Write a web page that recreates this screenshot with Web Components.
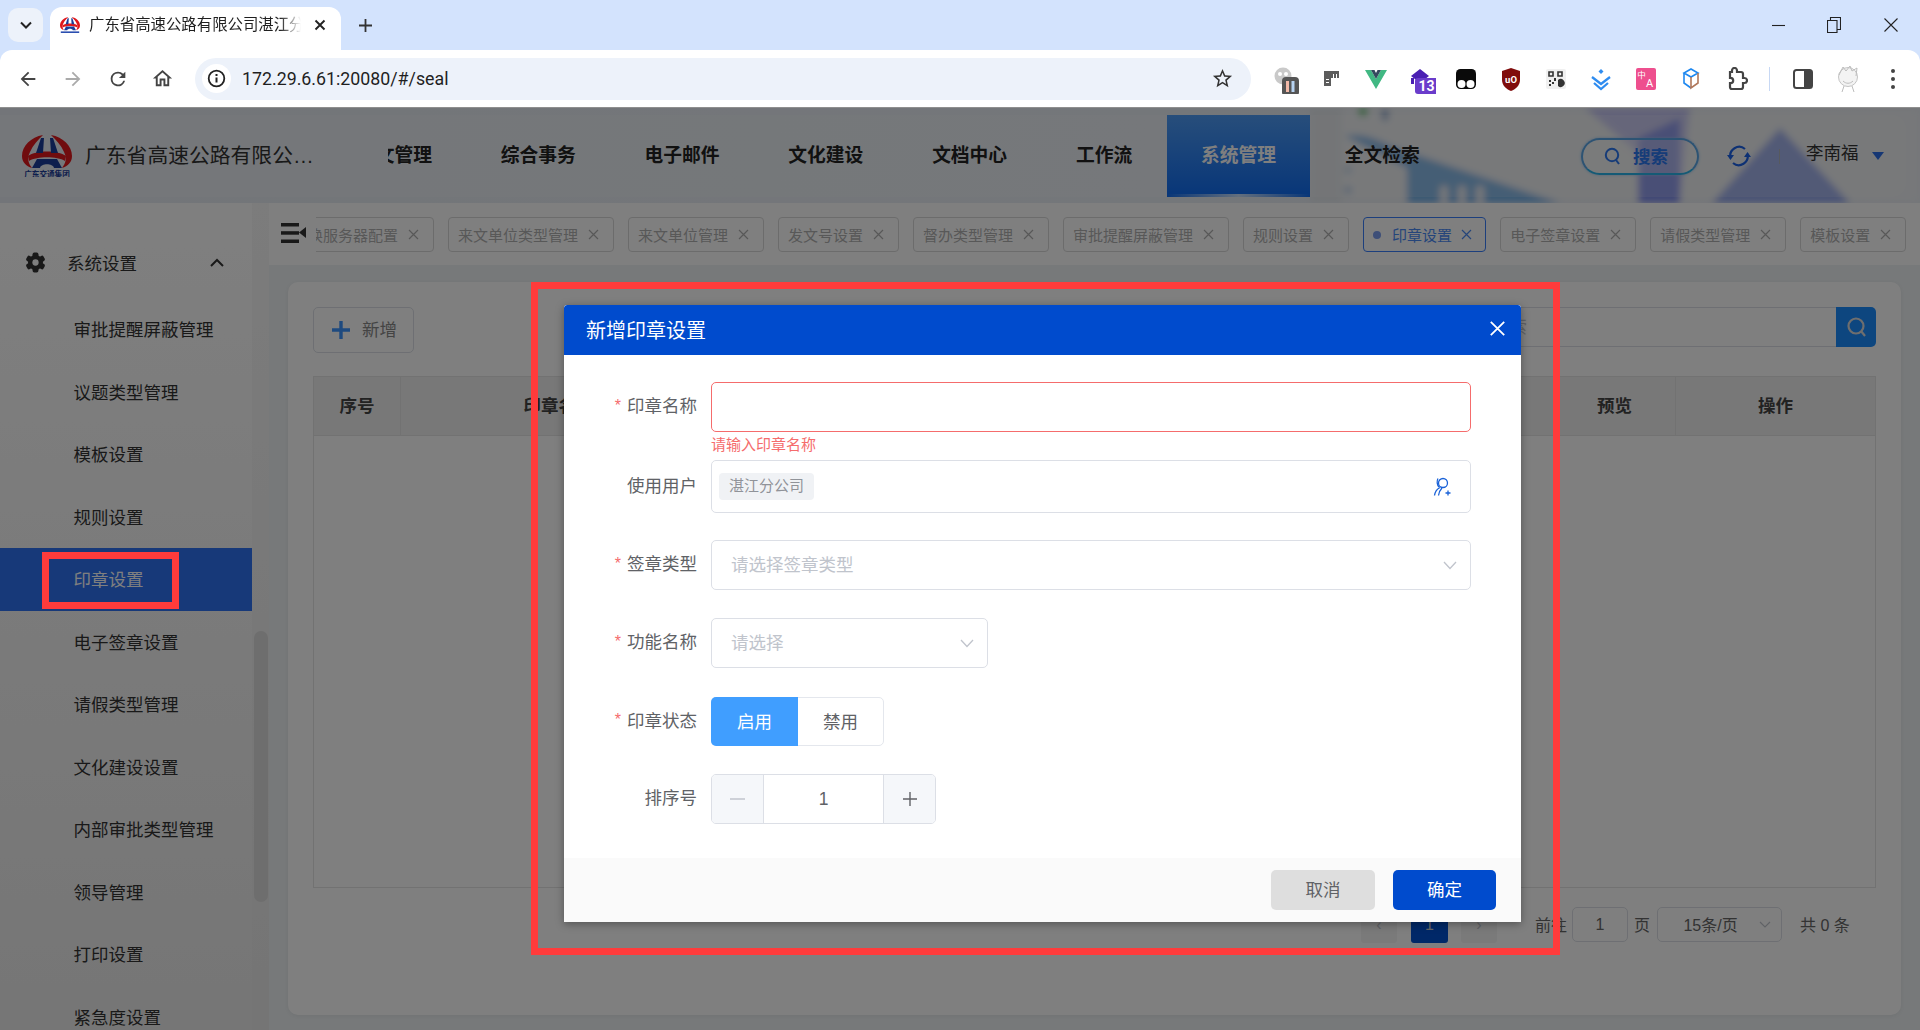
<!DOCTYPE html>
<html lang="zh-CN">
<head>
<meta charset="utf-8">
<title>印章设置</title>
<style>
  html, body { margin: 0; padding: 0; width: 1920px; height: 1030px; overflow: hidden; background: #fff; }
  body { font-family: "Liberation Sans", "Noto Sans CJK SC", sans-serif; }
  app-shell { height: 922px; }
</style>
</head>
<body>
<browser-chrome></browser-chrome>
<app-shell>
  <app-header></app-header>
  <side-menu></side-menu>
  <tag-bar></tag-bar>
  <seal-page></seal-page>
  <seal-dialog title="新增印章设置">
    <form-row label="印章名称" required>
      <text-box invalid></text-box>
      <div slot="hint">请输入印章名称</div>
    </form-row>
    <form-row label="使用用户">
      <user-box></user-box>
    </form-row>
    <form-row label="签章类型" required gap="27">
      <drop-box placeholder="请选择签章类型" width="760"></drop-box>
    </form-row>
    <form-row label="功能名称" required gap="28">
      <drop-box placeholder="请选择" width="277"></drop-box>
    </form-row>
    <form-row label="印章状态" required gap="29">
      <radio-pair></radio-pair>
    </form-row>
    <form-row label="排序号" gap="28">
      <num-box value="1"></num-box>
    </form-row>
  </seal-dialog>
  <note-box x="42" y="444" w="137" h="57"></note-box>
  <note-box x="531" y="174" w="1029" h="673"></note-box>
</app-shell>

<script>
const FONT = `"Liberation Sans", "Noto Sans CJK SC", sans-serif`;

// the company mark, used big in the header and small on the browser tab
class GdLogo extends HTMLElement {
  constructor() {
    super();
    const size = this.getAttribute('size') || 50;
    const small = this.hasAttribute('small');
    this.attachShadow({ mode: 'open' }).innerHTML = `
      <style>:host{display:block;line-height:0;flex:none}</style>
      <svg width="${size}" height="${size * 0.84}" viewBox="0 0 50 42">
        <path fill="#e0181c" d="M21 0C9 2 0 11 0 21c0 6 4 10 10 12-4-5-5-10-2-16C11 10 16 5 21 0zM29 0c12 2 21 11 21 21 0 6-4 10-10 12 4-5 5-10 2-16C39 10 34 5 29 0z"/>
        <path fill="#e0181c" d="M7 26c8-5 28-5 36 0l1-5C36 15 14 15 6 21z"/>
        <path fill="#1b3d9a" d="M19 3h3l-1 15h-7zM28 3h3l5 15h-7zM10 33l5-9h20l5 9h-8c-1-5-13-5-14 0z"/>
        ${small ? '<rect x="2" y="36" width="46" height="5" fill="#2b4fb0"/>' : '<text x="25" y="41.5" text-anchor="middle" font-size="7.6" font-weight="700" fill="#1b3d9a" font-family=\'"Noto Sans CJK SC",sans-serif\'>广东交通集团</text>'}
      </svg>`;
  }
}
customElements.define('gd-logo', GdLogo);

// extension icons, all in a 30x30 box
const EXT_ICONS = [
  `<circle cx="12" cy="12" r="8.5" fill="#c9c9c9"/><circle cx="9" cy="10" r="2" fill="#fff"/><circle cx="15" cy="10" r="2" fill="#fff"/><rect x="11" y="13" width="17" height="19" rx="4" fill="#555"/><rect x="15" y="17" width="3" height="11" fill="#f2b9a8"/><rect x="20.5" y="17" width="3" height="11" fill="#b7d3f2"/>`,
  `<path fill="#5c5c5c" d="M8 7h15v7h-8v8H8z"/><path fill="#fff" d="M17 10h1v4h-1zM20 10h1v4h-1zM10 15h3v1h-3zM10 18h3v1h-3z"/>`,
  `<path fill="#41b883" d="M4 6h6l5 9 5-9h6L15 25z"/><path fill="#34495e" d="M10 6h3.5l1.5 3 1.5-3H20l-5 9z"/>`,
  `<path fill="#4a1fb3" d="M14 5l9 7-9 7-9-7z"/><path fill="#4a1fb3" d="M5 14h3v6H5z"/><rect x="9" y="14" width="23" height="16" rx="3" fill="#6a3ccb"/><text x="20.5" y="27" text-anchor="middle" font-size="14" font-weight="700" fill="#fff" font-family="Roboto,sans-serif">13</text>`,
  `<rect x="5" y="5" width="20" height="20" rx="4.5" fill="#0a0a0a"/><circle cx="10.5" cy="20" r="4" fill="#fff"/><circle cx="19.5" cy="20" r="4" fill="#fff"/>`,
  `<path fill="#800c0c" d="M15 4l9 3v9c0 5-4 9-9 11-5-2-9-6-9-11V7z"/><text x="15" y="18.5" text-anchor="middle" font-size="9.5" font-weight="700" fill="#fff" font-family="Roboto,sans-serif">uO</text>`,
  `<rect x="5" y="5" width="20" height="20" rx="2" fill="#f0f0f0"/><path fill="none" stroke="#333" stroke-width="1.6" d="M8 8h4v4H8zM17 8h4v4h-4z"/><path fill="#333" d="M8 16h2v2H8zM11 18h2v2h-2zM8 20h2v2H8zM13 14h2v3h-2zM17 16a4 4 0 1 1 0 6z"/>`,
  `<g fill="none" stroke="#2e8cf0" stroke-width="2.3"><path d="M6 13l9 7 9-7"/><path d="M8 19l7 6 7-6"/></g><path fill="#2e8cf0" d="M15 5l2.5 2.5L15 10l-2.5-2.5z"/>`,
  `<rect x="5" y="4" width="20" height="22" rx="2" fill="#ee4f8e"/><text x="10.5" y="14" text-anchor="middle" font-size="8.5" fill="#fff" font-family='"Noto Sans CJK SC",sans-serif'>中</text><text x="18.5" y="23" text-anchor="middle" font-size="11" fill="#fff" font-family="Roboto,sans-serif">A</text>`,
  `<path fill="none" stroke="#1e88f0" stroke-width="1.6" d="M15 5l7 4-7 4-7-4zM8 9v10l7 5"/><path fill="none" stroke="#b0775a" stroke-width="1.6" d="M22 9v10l-7 5V13"/>`,
];

class BrowserChrome extends HTMLElement {
  constructor() {
    super();
    const slots = EXT_ICONS.map(svg => `<span class="slot"><svg width="30" height="30" viewBox="0 0 30 30">${svg}</svg></span>`).join('');
    this.attachShadow({ mode: 'open' }).innerHTML = `
      <style>
        :host{display:block;height:108px;background:#d3e3fd;font-family:${FONT};color:#1f1f1f;overflow:hidden}
        .strip{height:50px;display:flex;align-items:flex-end;position:relative}
        .tabsearch{width:35px;height:34px;margin:0 7px 8px 8px;border-radius:10px;background:#edf2fa;display:flex;align-items:center;justify-content:center;flex:none}
        .tab{width:291px;height:43px;background:#fff;border-radius:12px 12px 0 0;display:flex;align-items:center;flex:none;box-sizing:border-box;padding:0 0 7px 10px;position:relative}
        .tab .title{width:212px;margin-left:9px;font-size:15.4px;line-height:20px;margin-top:-1px;white-space:nowrap;overflow:hidden;-webkit-mask-image:linear-gradient(90deg,#000 90%,transparent)}
        .tab .x{margin-left:13px;display:flex}
        .new{width:48px;height:43px;padding-bottom:7px;box-sizing:border-box;display:flex;align-items:center;justify-content:center;flex:none}
        .win{margin-left:auto;display:flex;height:50px;align-items:center}
        .win span{width:56px;display:flex;justify-content:center}
        .win span:last-child{width:58px}
        .bar{height:57px;background:#fff;border-radius:12px 12px 0 0;display:flex;align-items:center;padding-left:5px;box-sizing:border-box}
        .slot{width:45px;height:45px;display:flex;align-items:center;justify-content:center;flex:none}
        .addr{width:1056px;height:42px;margin:0 12px 0 10px;border-radius:21px;background:#edf2fa;display:flex;align-items:center;flex:none;padding:0 17px 0 7px;box-sizing:border-box}
        .info{width:29px;height:29px;border-radius:50%;background:#fff;display:flex;align-items:center;justify-content:center}
        .url{margin-left:11px;font-family:Roboto,sans-serif;font-size:17.8px;flex:1}
        .sep{width:1px;height:24px;background:#c7d8f4;margin:0 10.5px 0 11px;flex:none}
        .line{height:1px;background:#8f8f8f}
      </style>
      <div class="strip">
        <div class="tabsearch"><svg width="14" height="14" viewBox="0 0 14 14"><path d="M2 4.5l5 5 5-5" fill="none" stroke="#222" stroke-width="2"/></svg></div>
        <div class="tab">
          <gd-logo size="20" small></gd-logo>
          <span class="title">广东省高速公路有限公司湛江分公司</span>
          <span class="x"><svg width="12" height="12" viewBox="0 0 12 12"><path d="M1.5 1.5l9 9M10.5 1.5l-9 9" stroke="#222" stroke-width="1.9"/></svg></span>
        </div>
        <div class="new"><svg width="15" height="15" viewBox="0 0 15 15"><path d="M7.5 1v13M1 7.5h13" stroke="#333" stroke-width="1.8"/></svg></div>
        <div class="win">
          <span><svg width="13" height="13" viewBox="0 0 13 13"><path d="M0 6.5h13" stroke="#222" stroke-width="1.1"/></svg></span>
          <span><svg width="14" height="16" viewBox="0 0 14 16"><path d="M.5 3.5h9.5v12H.5zM3.5 3.5V.5h10v12H10" fill="none" stroke="#222" stroke-width="1.1"/></svg></span>
          <span><svg width="14" height="14" viewBox="0 0 14 14"><path d="M.5.5l13 13M13.5.5l-13 13" stroke="#222" stroke-width="1.1"/></svg></span>
        </div>
      </div>
      <div class="bar">
        <span class="slot"><svg width="22" height="22" viewBox="0 0 24 24"><path fill="#444" d="M20 11H7.8l5.6-5.6L12 4l-8 8 8 8 1.4-1.4L7.8 13H20z"/></svg></span>
        <span class="slot"><svg width="22" height="22" viewBox="0 0 24 24"><path fill="#aaa" d="M4 11h12.2l-5.6-5.6L12 4l8 8-8 8-1.4-1.4 5.6-5.6H4z"/></svg></span>
        <span class="slot"><svg width="22" height="22" viewBox="0 0 24 24"><path fill="#444" d="M17.65 6.35A7.96 7.96 0 0 0 12 4a8 8 0 1 0 7.73 10h-2.08A6 6 0 1 1 12 6c1.66 0 3.14.69 4.22 1.78L13 11h7V4z"/></svg></span>
        <span class="slot"><svg width="23" height="23" viewBox="0 0 24 24"><path fill="#444" d="M12 5.69l5 4.5V18h-2v-6H9v6H7v-7.81l5-4.5M12 3L2 12h3v8h6v-6h2v6h6v-8h3L12 3z"/></svg></span>
        <div class="addr">
          <span class="info"><svg width="19" height="19" viewBox="0 0 19 19"><circle cx="9.5" cy="9.5" r="7.8" fill="none" stroke="#222" stroke-width="1.8"/><path d="M9.5 8.5v5M9.5 5v2" stroke="#222" stroke-width="2"/></svg></span>
          <span class="url">172.29.6.61:20080/#/seal</span>
          <svg width="23" height="23" viewBox="0 0 24 24"><path fill="#333" d="M22 9.24l-7.19-.62L12 2 9.19 8.63 2 9.24l5.46 4.73L5.82 21 12 17.27 18.18 21l-1.63-7.03L22 9.24zM12 15.4l-3.76 2.27 1-4.28-3.32-2.88 4.38-.38L12 6.1l1.71 4.04 4.38.38-3.32 2.88 1 4.28L12 15.4z"/></svg>
        </div>
        ${slots}
        <span class="slot"><svg width="24" height="24" viewBox="0 0 24 24"><path fill="none" stroke="#444" stroke-width="2.2" d="M20.5 11H19V7c0-1.1-.9-2-2-2h-4V3.5C13 2.12 11.88 1 10.5 1S8 2.12 8 3.5V5H6v5.8h.5c1.49 0 2.7 1.21 2.7 2.7s-1.21 2.7-2.7 2.7H6V20c0 1.1.9 2 2 2h9c1.1 0 2-.9 2-2v-4h1.5c1.38 0 2.5-1.12 2.5-2.5S21.88 11 20.5 11z"/></svg></span>
        <span class="sep"></span>
        <span class="slot"><svg width="20" height="20" viewBox="0 0 20 20"><rect x="1" y="1" width="18" height="18" rx="2.5" fill="none" stroke="#444" stroke-width="2"/><rect x="11" y="1" width="8" height="18" fill="#444"/></svg></span>
        <span class="slot"><svg width="26" height="30" viewBox="0 0 26 30"><circle cx="13" cy="13" r="9.5" fill="#f3f3f3" stroke="#c4c4c4"/><path d="M4 11l4-8 3 4 4-5 2 5 5-3-1 8M8 17c3 3 7 3 10 0M9 22l-2 6M17 22l2 6" fill="none" stroke="#bdbdbd"/></svg></span>
        <span class="slot"><svg width="6" height="22" viewBox="0 0 6 22"><circle cx="3" cy="3" r="2" fill="#444"/><circle cx="3" cy="11" r="2" fill="#444"/><circle cx="3" cy="19" r="2" fill="#444"/></svg></span>
      </div>
      <div class="line"></div>`;
  }
}
customElements.define('browser-chrome', BrowserChrome);

// page frame: header on top, menu on the left, tabs and card on the right, mask over it all
const shellTpl = document.createElement('template');
shellTpl.innerHTML = `
  <style>
    :host{display:grid;grid-template-columns:269px 1fr;grid-template-rows:95px 62px 1fr;position:relative;overflow:hidden;background:#eef2f4;font-family:${FONT}}
    ::slotted(app-header){grid-column:1 / 3}
    ::slotted(side-menu){grid-column:1;grid-row:2 / 4}
    ::slotted(tag-bar){grid-column:2;grid-row:2}
    ::slotted(seal-page){grid-column:2;grid-row:3}
    .mask{position:absolute;inset:0;background:rgba(0,0,0,.5)}
  </style>
  <slot></slot>
  <div class="mask"></div>
  <slot name="over"></slot>`;
class AppShell extends HTMLElement {
  constructor() {
    super();
    this.attachShadow({ mode: 'open' }).appendChild(shellTpl.content.cloneNode(true));
    for (const el of this.querySelectorAll('seal-dialog, note-box')) el.slot = 'over';
  }
}
customElements.define('app-shell', AppShell);

class AppHeader extends HTMLElement {
  constructor() {
    super();
    const items = ['公文管理', '综合事务', '电子邮件', '文化建设', '文档中心', '工作流', '系统管理', '全文检索'];
    this.attachShadow({ mode: 'open' }).innerHTML = `
      <style>
        :host{display:block;height:95px;position:relative;background:linear-gradient(90deg,#e6ebf2,#e9eef5 60%,#e8ecf3);overflow:hidden}
        .art{position:absolute;left:0;top:0}
        .panel{position:relative;margin:7px 14px 6px 0;height:82px;border-radius:0 14px 14px 0;background:rgba(255,255,255,.16);display:flex;align-items:center;padding-left:22px}
        .name{width:230px;margin:-4px 0 0 13px;font-size:20.8px;color:#333;white-space:nowrap;overflow:hidden;text-overflow:ellipsis;flex:none}
        nav{width:1065px;height:82px;margin-left:73px;overflow:hidden;flex:none}
        .row{display:flex;height:82px;margin-left:-65.4px}
        .item{padding:0 34.4px;line-height:82px;font-size:18.75px;font-weight:700;color:#222;white-space:nowrap;position:relative}
        .item.on{color:#fff;background:linear-gradient(#4f9cf6,#0f6cf2)}
        .item.on::after{content:"";position:absolute;left:0;right:0;bottom:0;height:3px;background:linear-gradient(90deg,transparent,#c8defa,transparent)}
        .search{margin-left:128px;width:118px;height:37px;box-sizing:border-box;border-radius:19px;border:2.5px solid #5aa6e6;border-bottom-color:#2bb4ea;background:rgba(255,255,255,.25);display:flex;align-items:center;padding-left:21px;font-size:17.5px;font-weight:700;color:#2d78f0;box-shadow:0 0 3px #9dc6f2;flex:none}
        .search span{margin-top:-2px}
        .search svg{margin-right:12px}
        .sync{margin-left:28px;display:flex}
        .div{width:1px;height:15px;background:#aeb4bc;margin-left:28px}
        .user{margin:-9px 0 0 26px;font-size:17.5px;color:#333;white-space:nowrap}
        .caret{margin-left:13px;width:0;height:0;border:6px solid transparent;border-top:8px solid #2d6fe8;border-bottom:0}
      </style>
      <svg class="art" width="1920" height="95" viewBox="0 0 1920 95">
        <defs><filter id="b" x="-10%" y="-10%" width="120%" height="120%"><feGaussianBlur stdDeviation="3.5"/></filter></defs>
        <g filter="url(#b)">
          <rect x="1330" y="0" width="590" height="95" fill="#eef1f4"/>
          <rect x="1310" y="0" width="32" height="95" fill="#e4e8ec"/>
          <path fill="#c4c4f2" d="M1585 0H1690L1680 95H1638V45z"/>
          <path fill="#7f8cea" d="M1638 30L1680 10V95H1638z"/>
          <path fill="#74b0e6" d="M1345 28C1360 25 1375 30 1390 38L1560 95H1407V60z"/>
          <path fill="#93a6ea" d="M1780 20L1850 95H1712z"/>
          <rect x="1440" y="78" width="8" height="17" fill="#e9eef4"/><rect x="1458" y="78" width="8" height="17" fill="#e9eef4"/><rect x="1476" y="78" width="8" height="17" fill="#e9eef4"/>
          <circle cx="1363" cy="4" r="5" fill="#78c987"/><ellipse cx="1385" cy="7" rx="4" ry="6" fill="#8ea9cf"/>
          <circle cx="1348" cy="62" r="4" fill="#c0d4ea"/><circle cx="1348" cy="82" r="4" fill="#b0c8e6"/>
        </g>
      </svg>
      <div class="panel">
        <gd-logo size="50"></gd-logo>
        <div class="name">广东省高速公路有限公司湛江分公司</div>
        <nav><div class="row">${items.map(t => `<div class="item${t === '系统管理' ? ' on' : ''}">${t}</div>`).join('')}</div></nav>
        <div class="search"><svg width="17" height="18" viewBox="0 0 17 18"><circle cx="8" cy="8" r="6.2" fill="none" stroke="#2d78f0" stroke-width="2"/><path d="M12 13l3 4" stroke="#2d78f0" stroke-width="2"/></svg><span>搜索</span></div>
        <span class="sync"><svg width="24" height="24" viewBox="0 0 24 24" fill="none" stroke="#1c62e8" stroke-width="2.2"><path d="M3.5 14A9 9 0 0 1 18 5"/><path d="M20.5 10A9 9 0 0 1 6 19"/><path fill="#1c62e8" stroke="none" d="M0 11h7l-3.5 5zM17 13h7l-3.5-5z"/></svg></span>
        <span class="div"></span>
        <span class="user">李南福</span>
        <span class="caret"></span>
      </div>`;
  }
}
customElements.define('app-header', AppHeader);

class SideMenu extends HTMLElement {
  constructor() {
    super();
    const items = ['审批提醒屏蔽管理', '议题类型管理', '模板设置', '规则设置', '印章设置', '电子签章设置', '请假类型管理', '文化建设设置', '内部审批类型管理', '领导管理', '打印设置', '紧急度设置'];
    this.attachShadow({ mode: 'open' }).innerHTML = `
      <style>
        :host{display:grid;grid-template-columns:252px 17px;overflow:hidden;height:827px}
        .menu{background:linear-gradient(#fff,#ececec);padding-top:29px;font-size:17.5px;color:#333;overflow:hidden}
        .head{height:60.5px;margin-bottom:5.5px;display:flex;align-items:center;padding-left:25px;position:relative}
        .head span{margin-left:21px}
        .head svg:last-child{margin-left:73px}
        .it{height:62.5px;line-height:64px;padding-left:73.5px;white-space:nowrap}
        .it.on{background:#2e72f2;color:#fff}
        .gutter{padding:428px 1px 0 2px;background:linear-gradient(#f8f8f8,#eaeaea)}
        .thumb{height:271px;border-radius:7px;background:#dcdcdc}
      </style>
      <div class="menu">
        <div class="head">
          <svg width="21" height="21" viewBox="0 0 18 18"><g fill="#333"><rect x="6.5" y=".5" width="5" height="17" rx="1.5"/><rect x="6.5" y=".5" width="5" height="17" rx="1.5" transform="rotate(60 9 9)"/><rect x="6.5" y=".5" width="5" height="17" rx="1.5" transform="rotate(120 9 9)"/><circle cx="9" cy="9" r="6.4"/></g><circle cx="9" cy="9" r="2.7" fill="#fff"/></svg>
          <span>系统设置</span>
          <svg width="14" height="9" viewBox="0 0 14 9"><path d="M1 8l6-6 6 6" fill="none" stroke="#333" stroke-width="2"/></svg>
        </div>
        ${items.map(t => `<div class="it${t === '印章设置' ? ' on' : ''}">${t}</div>`).join('')}
      </div>
      <div class="gutter"><div class="thumb"></div></div>`;
  }
}
customElements.define('side-menu', SideMenu);

class TagBar extends HTMLElement {
  constructor() {
    super();
    const tags = ['交换服务器配置', '来文单位类型管理', '来文单位管理', '发文号设置', '督办类型管理', '审批提醒屏蔽管理', '规则设置', '印章设置', '电子签章设置', '请假类型管理', '模板设置'];
    this.attachShadow({ mode: 'open' }).innerHTML = `
      <style>
        :host{display:flex;height:62px;background:#fff;padding-left:12px;align-items:center;overflow:hidden;box-sizing:border-box}
        .toggle{flex:none;display:flex;margin:-3px 10px 0 0}
        .scroll{overflow:hidden;flex:1}
        .row{display:flex;gap:14px;margin-left:-33px;padding-top:1px}
        .tag{flex:none;height:35px;box-sizing:border-box;border:1px solid #d8d8d8;border-radius:4px;padding:0 9px;display:flex;align-items:center;font-size:15px;color:#b0b0b0;white-space:nowrap}
        .tag svg{margin-left:10px;margin-right:5px}
        .tag.on{border-color:#3a7ffb;color:#4b8af5;padding-right:8px}
        .tag.on svg{margin-left:9px}
        .tag.on i{width:8px;height:8px;border-radius:50%;background:#7c9ef0;margin-right:11px}
      </style>
      <svg class="toggle" width="25" height="20" viewBox="0 0 25 20"><g fill="#333"><rect width="18" height="3.5"/><rect y="8.2" width="18" height="3.5"/><rect y="16.5" width="18" height="3.5"/><path d="M25 4v11l-7-5.5z"/></g></svg>
      <div class="scroll"><div class="row">
        ${tags.map(t => `<div class="tag${t === '印章设置' ? ' on' : ''}">${t === '印章设置' ? '<i></i>' : ''}${t}<svg width="11" height="11" viewBox="0 0 11 11"><path d="M1 1l9 9M10 1l-9 9" stroke="currentColor" stroke-width="1.2"/></svg></div>`).join('')}
      </div></div>`;
  }
}
customElements.define('tag-bar', TagBar);

class SealPage extends HTMLElement {
  constructor() {
    super();
    this.attachShadow({ mode: 'open' }).innerHTML = `
      <style>
        :host{display:block;padding:17px 19px 15px;box-sizing:border-box;height:765px}
        .card{height:733px;box-sizing:border-box;background:#fff;border-radius:10px;padding:25px;font-size:17.5px;color:#666;box-shadow:0 1px 4px rgba(0,0,0,.06)}
        .tools{height:46px;display:flex;justify-content:space-between;align-items:flex-start;margin-bottom:23px}
        .add{width:101px;height:46px;box-sizing:border-box;border:1px solid #dcdfe6;border-radius:5px;display:flex;align-items:center;padding:0 0 4px 18px;color:#888}
        .add svg{margin:3px 12px 0 0}
        .find{display:flex;height:40px}
        .find input{width:469px;height:40px;box-sizing:border-box;border:1px solid #dcdfe6;border-right:0;padding:0 19px;font:inherit;border-radius:5px 0 0 5px;background:transparent;outline:0}
        .find input::placeholder{color:#c0c4cc}
        .find b{width:40px;height:40px;background:#1b8cff;border-radius:0 5px 5px 0;display:flex;align-items:center;justify-content:center}
        .table{height:512px;box-sizing:border-box;border:1px solid #e4e4e4;width:1563px}
        .thead{display:grid;grid-template-columns:87px 316px 837px 122px 1fr;height:58px;background:#f0f0f0;border-bottom:1px solid #e4e4e4}
        .thead div{display:flex;align-items:center;justify-content:center;font-weight:700;color:#444;border-right:1px solid #e4e4e4;padding-bottom:4px;box-sizing:border-box}
        .thead div:last-child{border-right:0}
        .pager{display:flex;align-items:center;height:37px;margin-top:18px;font-size:16px;color:#666;padding-left:1048px}
        .pager>span,.pager>i{position:relative}
        .btn{width:36px;height:37px;background:#f4f4f5;border-radius:3px;display:flex;align-items:center;justify-content:center;color:#c0c4cc;flex:none}
        .cur{background:#0050d0;color:#ccc;margin:0 13px 0 14px;width:37px}
        .box{height:35px;border:1px solid #dcdfe6;border-radius:5px;box-sizing:border-box;display:flex;align-items:center;justify-content:center;flex:none}
      </style>
      <div class="card">
        <div class="tools">
          <div class="add"><svg width="18" height="18" viewBox="0 0 18 18"><path d="M9 0v18M0 9h18" stroke="#3c94ff" stroke-width="3.4"/></svg>新增</div>
          <div class="find"><input placeholder="请输入关键字搜索"><b><svg width="21" height="22" viewBox="0 0 21 22"><circle cx="10" cy="10" r="7.5" fill="none" stroke="#ddd" stroke-width="2.2"/><path d="M15 15l4 5" stroke="#ddd" stroke-width="2.2"/></svg></b></div>
        </div>
        <div class="table">
          <div class="thead"><div>序号</div><div>印章名称</div><div></div><div>预览</div><div>操作</div></div>
        </div>
        <div class="pager">
          <span class="btn">‹</span><span class="btn cur">1</span><span class="btn">›</span>
          <span style="margin-left:38px;top:-1px">前往</span>
          <span class="box" style="width:56px;margin:0 6px 0 5px">1</span><span style="top:-1px">页</span>
          <span class="box" style="width:125px;margin:0 18px 0 7px;padding:0 18px 2px 0">15条/页<svg style="position:absolute;right:10px;top:13px" width="12" height="8" viewBox="0 0 12 8"><path d="M1 1l5 5 5-5" fill="none" stroke="#c0c4cc" stroke-width="1.2"/></svg></span>
          <span style="top:-1px">共 0 条</span>
        </div>
      </div>`;
  }
}
customElements.define('seal-page', SealPage);

class SealDialog extends HTMLElement {
  constructor() {
    super();
    this.attachShadow({ mode: 'open' }).innerHTML = `
      <style>
        :host{display:block;position:absolute;left:564px;top:197px;width:957px;height:617px;background:#fff;border-radius:3px 3px 0 0;box-shadow:0 2px 8px rgba(0,0,0,.35);font-family:${FONT};overflow:hidden}
        header{height:50px;background:#004bcd;color:#fff;display:flex;align-items:center;justify-content:space-between;padding:0 16px 0 22px;font-size:20px;border-radius:3px 3px 0 0}
        header span{margin-top:-2px}
        header svg{margin-top:-3px}
        .body{height:503px;box-sizing:border-box;padding-top:27px}
        footer{height:64px;background:#fafafa;display:flex;justify-content:flex-end;align-items:flex-start;padding:12px 25px 0 0;box-sizing:border-box;gap:18px}
        button{width:104px;height:40px;border:0;border-radius:5px;font:inherit;font-size:17.5px;padding:0 0 3px}
        .no{background:#dedede;color:#606266}
        .ok{background:#004bcd;color:#fff;width:103px}
      </style>
      <header><span>${this.getAttribute('title')}</span><svg width="15" height="15" viewBox="0 0 15 15"><path d="M.8.8l13.4 13.4M14.2.8L.8 14.2" stroke="#fff" stroke-width="1.8"/></svg></header>
      <div class="body"><slot></slot></div>
      <footer><button class="no">取消</button><button class="ok">确定</button></footer>`;
  }
}
customElements.define('seal-dialog', SealDialog);

class FormRow extends HTMLElement {
  constructor() {
    super();
    const star = this.hasAttribute('required') ? '<i>*</i>' : '';
    this.attachShadow({ mode: 'open' }).innerHTML = `
      <style>
        :host{display:grid;grid-template-columns:133px 760px;column-gap:14px;margin-top:${this.getAttribute('gap') || 0}px;font-size:17.5px;color:#606266}
        label{display:flex;justify-content:flex-end;align-items:center;padding-bottom:5px;box-sizing:border-box;white-space:nowrap}
        i{font-style:normal;color:#f56c6c;margin-right:6px;font-size:16px;position:relative;top:1px}
        .hint{grid-column:2;font-size:15px;color:#f56c6c;height:28px;line-height:26px}
      </style>
      <label>${star}${this.getAttribute('label')}</label>
      <div><slot></slot></div>
      <div class="hint"><slot name="hint"></slot></div>`;
    if (!this.querySelector('[slot=hint]')) this.shadowRoot.querySelector('.hint').style.display = 'none';
  }
}
customElements.define('form-row', FormRow);

class TextBox extends HTMLElement {
  constructor() {
    super();
    const c = this.hasAttribute('invalid') ? '#f56c6c' : '#dcdfe6';
    this.attachShadow({ mode: 'open' }).innerHTML = `<style>:host{display:block;height:50px;box-sizing:border-box;border:1px solid ${c};border-radius:5px}</style>`;
  }
}
customElements.define('text-box', TextBox);

class UserBox extends HTMLElement {
  constructor() {
    super();
    this.attachShadow({ mode: 'open' }).innerHTML = `
      <style>
        :host{display:flex;height:53px;box-sizing:border-box;border:1px solid #dcdfe6;border-radius:5px;align-items:center;justify-content:space-between;padding:0 16px 0 7px}
        span{width:95px;height:27px;box-sizing:border-box;background:#f0f2f5;border-radius:4px;font-size:15px;color:#909399;line-height:26px;text-align:center}
      </style>
      <span>湛江分公司</span>
      <svg width="21" height="19" viewBox="0 0 21 19" fill="none" stroke="#1a62d8" stroke-width="1.3"><circle cx="10" cy="6" r="4.5"/><path d="M5 1.5C3.5 4 4 8 6 10M7 10.5C4 12 2 15 1.5 18.5M9 11C7 13 6 15 5.5 18.5M15 13.5v5M12.5 16h5"/></svg>`;
  }
}
customElements.define('user-box', UserBox);

class DropBox extends HTMLElement {
  constructor() {
    super();
    this.attachShadow({ mode: 'open' }).innerHTML = `
      <style>
        :host{display:flex;width:${this.getAttribute('width')}px;height:50px;box-sizing:border-box;border:1px solid #dcdfe6;border-radius:5px;align-items:center;justify-content:space-between;padding:0 13px 0 19px;color:#c0c4cc}
        span{margin-top:-4px}
      </style>
      <span>${this.getAttribute('placeholder')}</span>
      <svg width="14" height="9" viewBox="0 0 14 9"><path d="M1 1l6 6.5L13 1" fill="none" stroke="#c0c4cc" stroke-width="1.3"/></svg>`;
  }
}
customElements.define('drop-box', DropBox);

class RadioPair extends HTMLElement {
  constructor() {
    super();
    this.attachShadow({ mode: 'open' }).innerHTML = `
      <style>
        :host{display:flex;width:173px;height:49px;box-sizing:border-box;border:1px solid #e4e7ed;border-radius:5px}
        div{display:flex;align-items:center;justify-content:center;flex:1;color:#606266;padding-bottom:2px}
        .on{flex:none;width:87px;margin:-1px 0 -1px -1px;background:#409eff;color:#fff;border-radius:5px 0 0 5px}
      </style>
      <div class="on">启用</div><div>禁用</div>`;
  }
}
customElements.define('radio-pair', RadioPair);

class NumBox extends HTMLElement {
  constructor() {
    super();
    this.attachShadow({ mode: 'open' }).innerHTML = `
      <style>
        :host{display:grid;grid-template-columns:51px 1fr 51px;width:225px;height:50px;box-sizing:border-box;border:1px solid #dcdfe6;border-radius:5px;overflow:hidden}
        div{display:flex;align-items:center;justify-content:center}
        .s{background:#f5f7fa}
        .v{border:solid #dcdfe6;border-width:0 1px;color:#606266}
      </style>
      <div class="s"><svg width="15" height="2"><path d="M0 1h15" stroke="#c0c4cc" stroke-width="1.6"/></svg></div>
      <div class="v">${this.getAttribute('value')}</div>
      <div class="s"><svg width="14" height="14"><path d="M7 0v14M0 7h14" stroke="#606266" stroke-width="1.4"/></svg></div>`;
  }
}
customElements.define('num-box', NumBox);

// red marker frames drawn on the screenshot
class NoteBox extends HTMLElement {
  constructor() {
    super();
    const a = n => this.getAttribute(n) + 'px';
    this.attachShadow({ mode: 'open' }).innerHTML = `
      <style>:host{display:block;position:absolute;left:${a('x')};top:${a('y')};width:${a('w')};height:${a('h')};box-sizing:border-box;border:7px solid #ff3b3b;pointer-events:none}</style>`;
  }
}
customElements.define('note-box', NoteBox);
</script>
</body>
</html>
